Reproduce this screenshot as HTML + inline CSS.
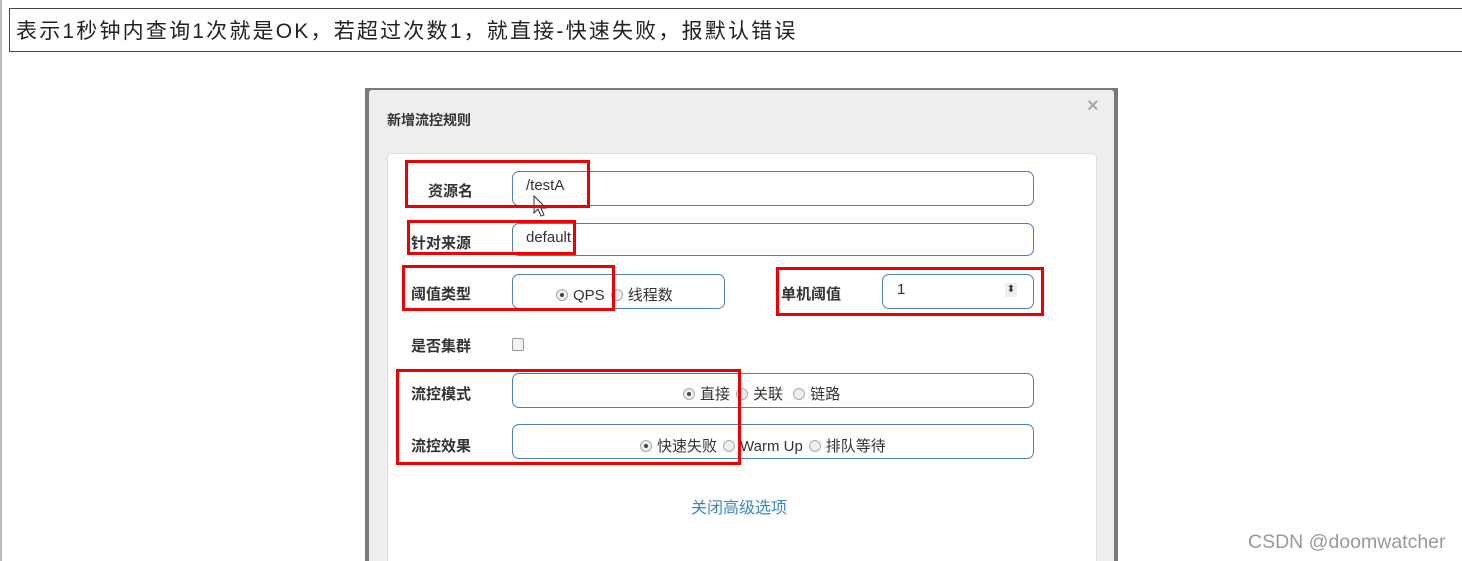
<!DOCTYPE html><html><head><meta charset="utf-8"><style>
html,body{margin:0;width:1462px;height:561px;overflow:hidden}
body{background:#fff;position:relative;font-family:"Liberation Sans","Noto Sans CJK SC",sans-serif;}
.a{position:absolute}
.lbl{position:absolute;font-size:15px;font-weight:bold;color:#333}
.inp{position:absolute;border:1px solid #4f7fad;border-radius:7px;background:#fff;box-sizing:border-box}
.red{position:absolute;border:3px solid #e00;box-sizing:border-box}
.rad{display:inline-block;width:10px;height:10px;border:1px solid #aaa;border-radius:50%;background:#eee;vertical-align:-1px;margin-right:5px;position:relative}
.rad.on:after{content:"";position:absolute;left:3px;top:3px;width:4px;height:4px;border-radius:50%;background:#444}
.t{position:absolute;font-size:15px;color:#333;white-space:nowrap}
.t i{font-style:normal;margin-right:6px}
</style></head><body>
<div class="a" style="left:0;top:0;width:2px;height:561px;background:#bbb"></div>
<div class="a" style="left:9px;top:8px;width:1455px;height:44px;border:1px solid #444;box-sizing:border-box"></div>
<div class="a" style="left:16px;top:15px;font-size:21px;letter-spacing:2.2px;color:#222;white-space:nowrap">表示1秒钟内查询1次就是OK，若超过次数1，就直接-快速失败，报默认错误</div>
<div class="a" style="left:365px;top:88px;width:753px;height:473px;background:#7a7a7a"></div>
<div class="a" style="left:369px;top:90px;width:745px;height:471px;background:#eee;border-radius:3px 3px 0 0"></div>
<div class="a" style="left:387px;top:110px;font-size:14px;font-weight:bold;color:#333">新增流控规则</div>
<div class="a" style="left:1087px;top:95px;font-size:20px;color:#aaa;font-weight:bold">×</div>
<div class="a" style="left:387px;top:153px;width:710px;height:420px;background:#fff;border:1px solid #ddd;border-radius:4px;box-sizing:border-box"></div>

<div class="lbl" style="left:428px;top:180px">资源名</div>
<div class="inp" style="left:512px;top:171px;width:522px;height:35px"></div>
<div class="t" style="left:526px;top:177px">/testA</div>
<svg class="a" style="left:533px;top:195px" width="16" height="24" viewBox="0 0 16 24"><path d="M1 1 L1 18 L5 14 L8 21 L11 20 L8 13 L13 13 Z" fill="#fff" stroke="#333" stroke-width="1"/></svg>
<div class="red" style="left:405px;top:160px;width:185px;height:48px"></div>

<div class="lbl" style="left:411px;top:232px">针对来源</div>
<div class="inp" style="left:512px;top:223px;width:522px;height:33px"></div>
<div class="t" style="left:526px;top:229px">default</div>
<div class="red" style="left:407px;top:220px;width:169px;height:35px"></div>

<div class="lbl" style="left:411px;top:283px">阈值类型</div>
<div class="inp" style="left:512px;top:274px;width:213px;height:35px"></div>
<div class="t" style="left:556px;top:284px"><span class="rad on"></span><i>QPS</i><span class="rad"></span>线程数</div>
<div class="red" style="left:402px;top:265px;width:213px;height:46px"></div>

<div class="lbl" style="left:781px;top:283px">单机阈值</div>
<div class="inp" style="left:882px;top:274px;width:152px;height:35px"></div>
<div class="t" style="left:897px;top:281px">1</div>
<div class="a" style="left:1005px;top:283px;width:12px;height:14px;background:#eee;font-size:10px;line-height:14px;text-align:center;color:#333">⬍</div>
<div class="red" style="left:776px;top:267px;width:268px;height:49px"></div>

<div class="lbl" style="left:411px;top:335px">是否集群</div>
<div class="a" style="left:512px;top:338px;width:10px;height:11px;border:1px solid #999;border-radius:2px;background:#f4f4f4"></div>

<div class="lbl" style="left:411px;top:383px">流控模式</div>
<div class="inp" style="left:512px;top:373px;width:522px;height:35px"></div>
<div class="t" style="left:683px;top:383px"><span class="rad on"></span><i>直接</i><span class="rad"></span><i>关联</i> <span class="rad"></span>链路</div>

<div class="lbl" style="left:411px;top:435px">流控效果</div>
<div class="inp" style="left:512px;top:424px;width:522px;height:35px"></div>
<div class="t" style="left:640px;top:435px"><span class="rad on"></span><i>快速失败</i><span class="rad"></span><i>Warm Up</i><span class="rad"></span>排队等待</div>
<div class="red" style="left:396px;top:369px;width:345px;height:96px"></div>

<div class="a" style="left:691px;top:494px;font-size:16px;color:#3a87c8">关闭高级选项</div>
<div class="a" style="left:1248px;top:531px;font-size:19.5px;color:#999">CSDN @doomwatcher</div>
</body></html>
